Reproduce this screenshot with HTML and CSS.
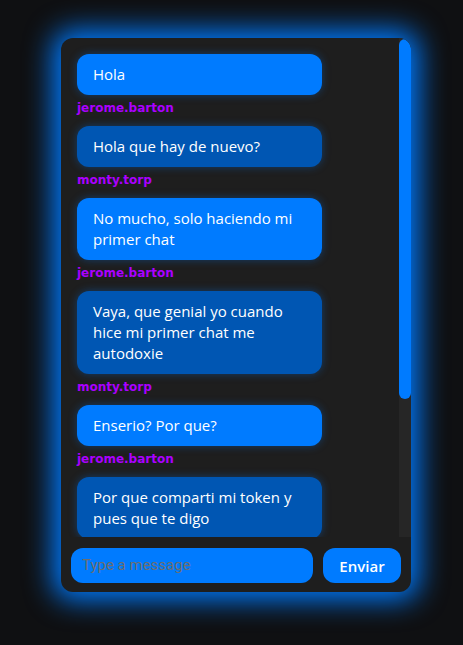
FILE: index.html
```html
<!DOCTYPE html>
<html lang="es">
<head>
<meta charset="utf-8">
<title>Chat</title>
<link rel="stylesheet" href="styles.css">
</head>
<body>
<div class="chat">
  <div class="body">
    <div class="messages">
      <div class="msg">
        <div class="bubble light">Hola</div>
        <div class="user">jerome.barton</div>
      </div>
      <div class="msg">
        <div class="bubble dark">Hola que hay de nuevo?</div>
        <div class="user">monty.torp</div>
      </div>
      <div class="msg">
        <div class="bubble light">No mucho, solo haciendo mi primer chat</div>
        <div class="user">jerome.barton</div>
      </div>
      <div class="msg">
        <div class="bubble dark">Vaya, que genial yo cuando hice mi primer chat me autodoxie</div>
        <div class="user">monty.torp</div>
      </div>
      <div class="msg">
        <div class="bubble light">Enserio? Por que?</div>
        <div class="user">jerome.barton</div>
      </div>
      <div class="msg">
        <div class="bubble dark">Por que comparti mi token y pues que te digo</div>
        <div class="user">monty.torp</div>
      </div>
    </div>
    <div class="scrollbar"><div class="thumb"></div></div>
  </div>
  <form class="composer">
    <input class="input" type="text" placeholder="Type a message">
    <button class="send" type="button">Enviar</button>
  </form>
</div>
</body>
</html>
```
FILE: styles.css
```css
html, body {
  margin: 0;
  height: 100%;
}
body {
  background: #0f1012;
  padding: 38px 0 0 61px;
  box-sizing: border-box;
  font-family: "Open Sans", "Noto Sans", sans-serif;
}
.chat {
  width: 350px;
  height: 554px;
  background: #1e1e1e;
  border-radius: 12px;
  box-shadow: 0 0 28px 8px #007bff;
  display: flex;
  flex-direction: column;
  overflow: hidden;
}
.body {
  flex: 1;
  display: flex;
  min-height: 0;
}
.messages {
  flex: 1;
  overflow: hidden;
  padding: 16px 0 0 16px;
}
.scrollbar {
  width: 12px;
  background: #262626;
}
.thumb {
  height: 360px;
  margin-top: 1px;
  background: #007bff;
  border-radius: 6px;
}
.msg {
  margin-bottom: 10px;
}
.bubble {
  width: 245px;
  box-sizing: border-box;
  padding: 10px 16px;
  border-radius: 12px;
  color: #fff;
  font-size: 15px;
  line-height: 21px;
  box-shadow: 0 0 8px rgba(0, 123, 255, 0.35);
}
.light {
  background: #007bff;
}
.dark {
  background: #0056b3;
}
.user {
  margin-top: 6px;
  font-family: "DejaVu Sans", Verdana, sans-serif;
  font-weight: bold;
  font-size: 12px;
  line-height: 15px;
  color: #aa00ff;
}
.composer {
  display: flex;
  gap: 10px;
  padding: 11px 10px 9px;
  margin: 0;
}
.input {
  flex: 1;
  min-width: 0;
  height: 35px;
  box-sizing: border-box;
  border: none;
  border-radius: 12px;
  background: #007bff;
  padding: 0 11px;
  font-family: Roboto, sans-serif;
  font-size: 15px;
  line-height: 35px;
  color: #fff;
  outline: none;
}
.input::placeholder {
  color: #6e6e6e;
}
.send {
  width: 78px;
  height: 35px;
  border: none;
  border-radius: 12px;
  background: #007bff;
  color: #fff;
  font-family: "Open Sans", sans-serif;
  font-weight: 600;
  font-size: 15px;
}
```
